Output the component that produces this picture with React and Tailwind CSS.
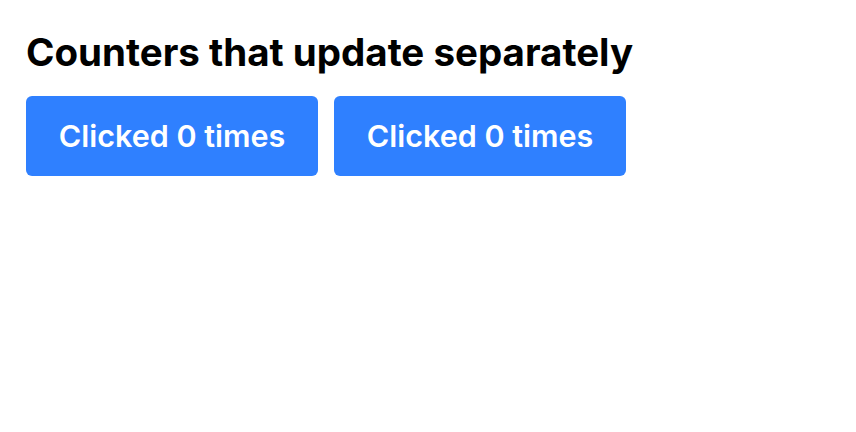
export default function App() {
  return (
    <div className="min-h-[432px] bg-white px-[26px] pt-[26px]" style={{ fontFamily: "Inter, 'Noto Sans', sans-serif" }}>
      <h1 className="text-[38.5px] font-bold leading-[52px] text-black">Counters that update separately</h1>
      <div className="mt-[18px] flex gap-4">
        {[0, 1].map((i) => (
          <button key={i} className="h-[80px] w-[292px] rounded-[6px] bg-[#2f80ff] text-[30.5px] font-semibold text-white">
            Clicked 0 times
          </button>
        ))}
      </div>
    </div>
  );
}
